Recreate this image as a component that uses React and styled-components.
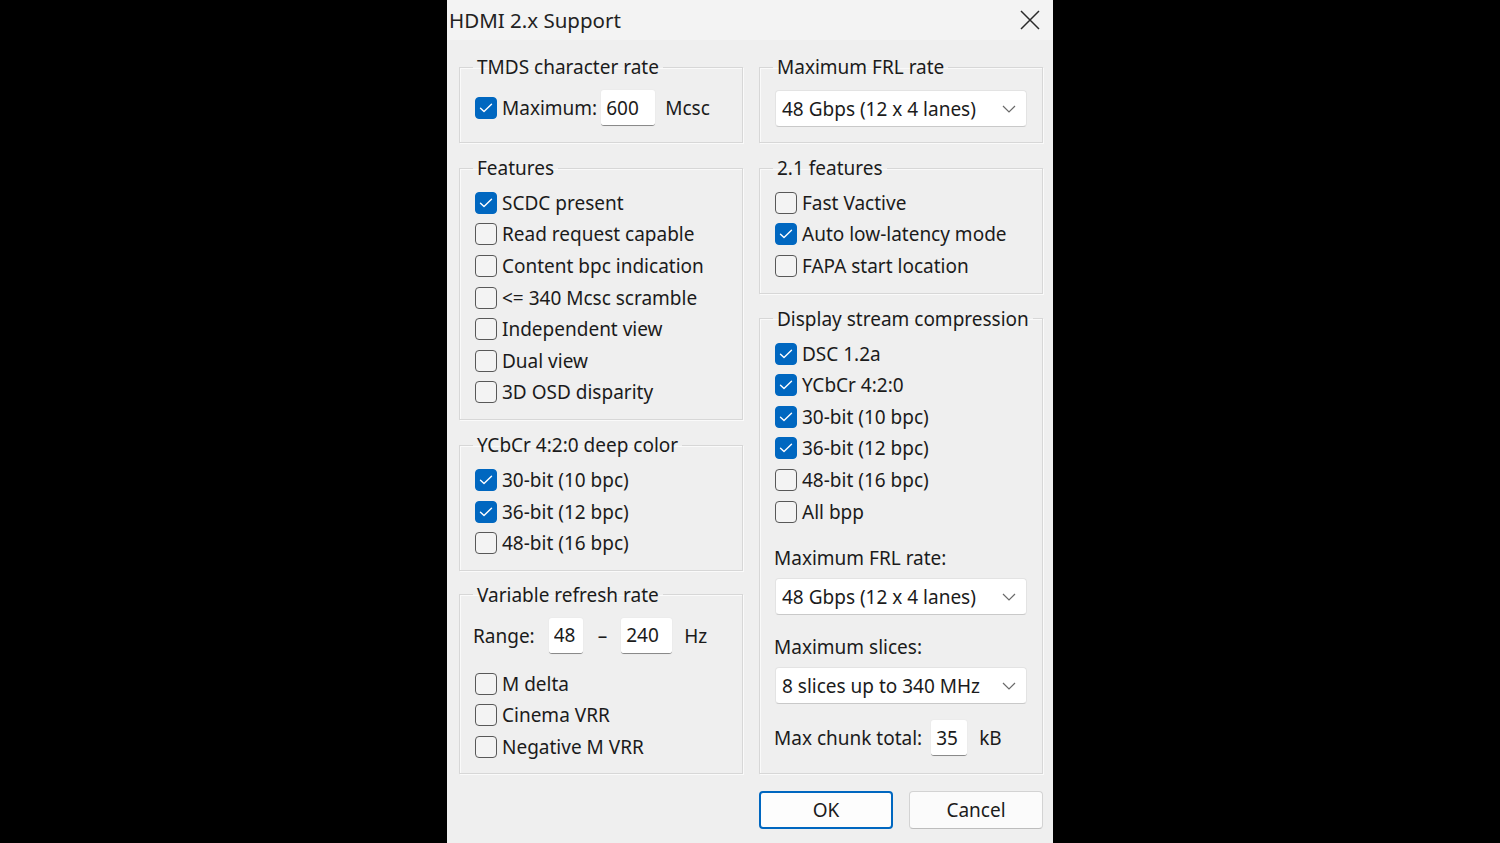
import React from "react";
import styled, { createGlobalStyle } from "styled-components";

const Global = createGlobalStyle`
  html, body { margin: 0; padding: 0; background: #000; }
  body { font-family: "Noto Sans", "Open Sans", sans-serif; }
  * { box-sizing: border-box; }
`;

const FONT = 19;

const Page = styled.div`
  width: 1500px;
  height: 843px;
  background: #000;
  display: flex;
  justify-content: center;
`;

const Dialog = styled.div`
  width: 606px;
  height: 843px;
  background: #efefef;
  display: flex;
  flex-direction: column;
  color: #1b1b1b;
  font-size: ${FONT}px;
  overflow: hidden;
`;

const TitleBar = styled.div`
  flex: none;
  height: 40px;
  display: flex;
  align-items: center;
  justify-content: space-between;
  padding: 0 12px 0 2px;
  background: #f3f3f3;
`;

const Title = styled.div`
  font-size: 20.5px;
  color: #222;
`;

const CloseBtn = styled.div`
  width: 22px;
  height: 22px;
  display: flex;
  align-items: center;
  justify-content: center;
`;

const Body = styled.div`
  flex: 1;
  min-height: 0;
  display: flex;
  flex-direction: column;
  padding: 16px 10px 14px 12px;
`;

const Columns = styled.div`
  display: grid;
  grid-template-columns: 284px 284px;
  column-gap: 16px;
  flex: 1;
  min-height: 0;
`;

const Column = styled.div`
  display: flex;
  flex-direction: column;
  gap: 14px;
  min-height: 0;
`;

const Group = styled.fieldset`
  margin: ${(p) => p.$mt || 0}px 0 0 0;
  min-width: 0;
  min-height: 0;
  padding: 8px 15px ${(p) => p.$pb || 11}px 15px;
  border: 1px solid #d7d7d7;
  box-shadow: inset 1px 1px 0 #fafafa, 1px 1px 0 #fafafa;
  display: flex;
  flex-direction: column;
  flex: ${(p) => (p.$grow ? "1 1 0" : "none")};
`;

const Legend = styled.legend`
  padding: 0 4px;
  margin-left: -2px;
  line-height: 22px;
  font-size: ${FONT}px;
  color: #1b1b1b;
  white-space: nowrap;
  max-width: none;
`;

const CheckRow = styled.label`
  display: flex;
  align-items: center;
  flex: none;
  height: 31.6px;
  gap: 5px;
  white-space: nowrap;
`;

const Box = styled.span`
  width: 22px;
  height: 22px;
  border-radius: 4px;
  flex: none;
  display: flex;
  align-items: center;
  justify-content: center;
  background: ${(p) => (p.$on ? "#0067c0" : "#f3f3f3")};
  border: 1px solid ${(p) => (p.$on ? "#0067c0" : "#585858")};
`;

const FieldRow = styled.div`
  display: flex;
  flex: none;
  align-items: center;
  height: ${(p) => p.$h || 44}px;
  margin: ${(p) => p.$mt || 0}px 0 ${(p) => p.$mb || 0}px ${(p) => p.$ml || 0}px;
  white-space: nowrap;
`;

const TextBox = styled.input`
  width: ${(p) => p.$w}px;
  height: 36px;
  margin: 0 ${(p) => p.$mr}px 0 ${(p) => p.$ml}px;
  border: none;
  border-bottom: 1px solid #8a8a8a;
  border-radius: 3px;
  background: #fff;
  box-shadow: 0 0 0 1px #ececec;
  padding: 0 5px;
  font-family: "Noto Sans", "Open Sans", sans-serif;
  font-size: ${FONT}px;
  color: #1b1b1b;
  outline: none;
`;

const Dash = styled.span`
  margin: 0 14px 0 15px;
`;

const Caption = styled.div`
  flex: none;
  height: 24px;
  line-height: 24px;
  margin: ${(p) => p.$mt}px 0 8px -1px;
  white-space: nowrap;
`;

const Combo = styled.div`
  flex: none;
  height: 37px;
  margin-top: ${(p) => p.$mt || 0}px;
  background: #fff;
  border: 1px solid #e3e3e3;
  border-bottom-color: #c9c9c9;
  border-radius: 4px;
  display: flex;
  align-items: center;
  justify-content: space-between;
  padding: 0 10px 0 6px;
  white-space: nowrap;
`;

const Buttons = styled.div`
  flex: none;
  display: flex;
  justify-content: flex-end;
  gap: 16px;
  margin-top: 17px;
`;

const Button = styled.button`
  width: 134px;
  height: 38px;
  border-radius: 4px;
  background: ${(p) => (p.$primary ? "#fdfdfd" : "#fbfbfb")};
  border: ${(p) => (p.$primary ? "2px solid #0067c0" : "1px solid #d3d3d3")};
  border-bottom-color: ${(p) => (p.$primary ? "#0067c0" : "#bdbdbd")};
  font-family: "Noto Sans", "Open Sans", sans-serif;
  font-size: ${FONT}px;
  color: #1b1b1b;
  padding: 0;
`;

const Check = () => (
  <svg width="14" height="10" viewBox="0 0 14 10">
    <path d="M1.5 5.2 L5 8.5 L12.5 1.2" fill="none" stroke="#fff" strokeWidth="1.4" strokeLinecap="round" strokeLinejoin="round" />
  </svg>
);

const CheckItem = ({ on, children }) => (
  <CheckRow>
    <Box $on={on}>{on && <Check />}</Box>
    <span>{children}</span>
  </CheckRow>
);

const Chevron = () => (
  <svg width="14" height="8" viewBox="0 0 14 8">
    <path d="M1 1 L7 7 L13 1" fill="none" stroke="#6a6a6a" strokeWidth="1.2" />
  </svg>
);

const Select = ({ children, mt }) => (
  <Combo $mt={mt}>
    <span>{children}</span>
    <Chevron />
  </Combo>
);

export default function App() {
  return (
    <Page>
      <Global />
      <Dialog>
        <TitleBar>
          <Title>HDMI 2.x Support</Title>
          <CloseBtn>
            <svg width="20" height="20" viewBox="0 0 20 20">
              <path d="M1 1 L19 19 M19 1 L1 19" stroke="#2a2a2a" strokeWidth="1.5" />
            </svg>
          </CloseBtn>
        </TitleBar>
        <Body>
          <Columns>
            <Column>
              <Group $pb={12}>
                <Legend>TMDS character rate</Legend>
                <FieldRow>
                  <CheckItem on>Maximum:</CheckItem>
                  <TextBox $w={54} $ml={4} $mr={10} defaultValue="600" readOnly />
                  <span>Mcsc</span>
                </FieldRow>
              </Group>
              <Group>
                <Legend>Features</Legend>
                <CheckItem on>SCDC present</CheckItem>
                <CheckItem>Read request capable</CheckItem>
                <CheckItem>Content bpc indication</CheckItem>
                <CheckItem>&lt;= 340 Mcsc scramble</CheckItem>
                <CheckItem>Independent view</CheckItem>
                <CheckItem>Dual view</CheckItem>
                <CheckItem>3D OSD disparity</CheckItem>
              </Group>
              <Group>
                <Legend>YCbCr 4:2:0 deep color</Legend>
                <CheckItem on>30-bit (10 bpc)</CheckItem>
                <CheckItem on>36-bit (12 bpc)</CheckItem>
                <CheckItem>48-bit (16 bpc)</CheckItem>
              </Group>
              <Group $grow $mt={-1}>
                <Legend>Variable refresh rate</Legend>
                <FieldRow $ml={-2} $mb={10}>
                  <span>Range:</span>
                  <TextBox $w={34} $ml={14} $mr={0} defaultValue="48" readOnly />
                  <Dash>–</Dash>
                  <TextBox $w={51} $ml={0} $mr={12} defaultValue="240" readOnly />
                  <span>Hz</span>
                </FieldRow>
                <CheckItem>M delta</CheckItem>
                <CheckItem>Cinema VRR</CheckItem>
                <CheckItem>Negative M VRR</CheckItem>
              </Group>
            </Column>
            <Column>
              <Group $pb={15}>
                <Legend>Maximum FRL rate</Legend>
                <Select mt={4}>48 Gbps (12 x 4 lanes)</Select>
              </Group>
              <Group>
                <Legend>2.1 features</Legend>
                <CheckItem>Fast Vactive</CheckItem>
                <CheckItem on>Auto low-latency mode</CheckItem>
                <CheckItem>FAPA start location</CheckItem>
              </Group>
              <Group $grow>
                <Legend>Display stream compression</Legend>
                <CheckItem on>DSC 1.2a</CheckItem>
                <CheckItem on>YCbCr 4:2:0</CheckItem>
                <CheckItem on>30-bit (10 bpc)</CheckItem>
                <CheckItem on>36-bit (12 bpc)</CheckItem>
                <CheckItem>48-bit (16 bpc)</CheckItem>
                <CheckItem>All bpp</CheckItem>
                <Caption $mt={19}>Maximum FRL rate:</Caption>
                <Select>48 Gbps (12 x 4 lanes)</Select>
                <Caption $mt={20}>Maximum slices:</Caption>
                <Select>8 slices up to 340 MHz</Select>
                <FieldRow $ml={-1} $h={36} $mt={16}>
                  <span>Max chunk total:</span>
                  <TextBox $w={36} $ml={9} $mr={12} defaultValue="35" readOnly />
                  <span>kB</span>
                </FieldRow>
              </Group>
            </Column>
          </Columns>
          <Buttons>
            <Button $primary>OK</Button>
            <Button>Cancel</Button>
          </Buttons>
        </Body>
      </Dialog>
    </Page>
  );
}
